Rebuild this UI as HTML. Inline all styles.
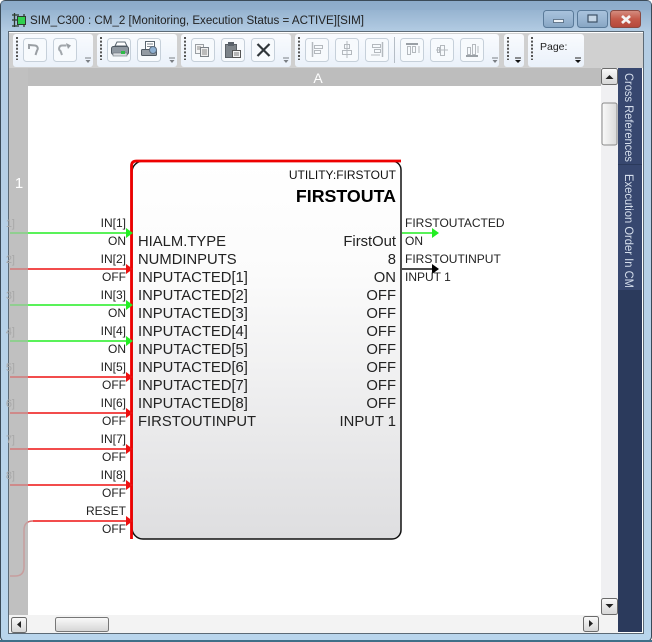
<!DOCTYPE html>
<html><head><meta charset="utf-8"><style>
html,body{margin:0;padding:0;width:652px;height:642px;overflow:hidden;background:#fff}
svg{position:absolute;left:0;top:0}
text{font-family:"Liberation Sans",sans-serif}
</style></head><body>
<svg width="652" height="642" viewBox="0 0 652 642" xmlns="http://www.w3.org/2000/svg">
<defs>
<linearGradient id="fr" x1="0" y1="0" x2="0" y2="1"><stop offset="0" stop-color="#8aa9c8"/><stop offset="0.05" stop-color="#b4cde4"/><stop offset="1" stop-color="#b9d5ec"/></linearGradient>
<linearGradient id="blk" x1="0" y1="0" x2="0" y2="1"><stop offset="0" stop-color="#ffffff"/><stop offset="0.3" stop-color="#fbfbfb"/><stop offset="1" stop-color="#dedee0"/></linearGradient>
<linearGradient id="btn" x1="0" y1="0" x2="0" y2="1"><stop offset="0" stop-color="#a9c3dd"/><stop offset="0.5" stop-color="#9ab6d2"/><stop offset="1" stop-color="#86a5c3"/></linearGradient>
<linearGradient id="cls" x1="0" y1="0" x2="0" y2="1"><stop offset="0" stop-color="#d58f82"/><stop offset="0.5" stop-color="#c45a4a"/><stop offset="1" stop-color="#b4473a"/></linearGradient>
<linearGradient id="sb" x1="0" y1="0" x2="0" y2="1"><stop offset="0" stop-color="#fafafa"/><stop offset="1" stop-color="#d5d5d5"/></linearGradient>
<linearGradient id="sbv" x1="0" y1="0" x2="1" y2="0"><stop offset="0" stop-color="#fafafa"/><stop offset="1" stop-color="#d9d9d9"/></linearGradient>
<linearGradient id="tb" x1="0" y1="0" x2="0" y2="1"><stop offset="0" stop-color="#f9fbfe"/><stop offset="1" stop-color="#eaf1fa"/></linearGradient>
</defs>

<!-- window frame -->
<rect width="652" height="642" fill="#fff"/>
<rect x="0.5" y="0.5" width="651" height="641" rx="5" fill="url(#fr)" stroke="#3a4a58"/>
<rect x="1" y="1" width="650" height="9" fill="#8daccb" opacity=".55"/>
<rect x="0" y="640" width="652" height="2" fill="#3f6f88"/>

<!-- title -->
<g>
<path d="M12 15h7M12 20h5M12 26h7M14.500 13v14M24 14v3M24 24v3" stroke="#2d3a2d" stroke-width="1.300" fill="none"/>
<rect x="17.500" y="16.500" width="8" height="8" fill="#30d050" stroke="#2d3a2d" stroke-width="1"/>
<text x="30" y="24" font-size="12.400" fill="#222" textLength="334" lengthAdjust="spacingAndGlyphs">SIM_C300 : CM_2 [Monitoring, Execution Status = ACTIVE][SIM]</text>
</g>

<!-- window buttons -->
<rect x="543.500" y="10.500" width="30" height="17" rx="3" fill="url(#btn)" stroke="#5a7a99"/>
<rect x="553.500" y="19.500" width="10" height="3" fill="#eef3f8" stroke="#41566b" stroke-width=".7"/>
<rect x="577.500" y="10.500" width="30" height="17" rx="3" fill="url(#btn)" stroke="#5a7a99"/>
<rect x="588" y="15" width="9" height="7" fill="#c5d6e6" stroke="#3d5166" stroke-width="1.200"/>
<rect x="610.500" y="10.500" width="30" height="17" rx="3" fill="url(#cls)" stroke="#8a4a42"/>
<path d="M622 16l8 7M630 16l-8 7" stroke="#f4f4f4" stroke-width="2.800"/>

<!-- client -->
<rect x="9" y="32" width="634" height="601" fill="#fff"/>
<rect x="8.500" y="31.500" width="635" height="602" fill="none" stroke="#5c6a76" stroke-width="1"/>
<rect x="9" y="33" width="634" height="35" fill="#d0d0d0"/>

<!-- toolbars -->
<rect x="13" y="34" width="80" height="33" rx="3" fill="url(#tb)"/>
<rect x="97" y="34" width="80" height="33" rx="3" fill="url(#tb)"/>
<rect x="181" y="34" width="110" height="33" rx="3" fill="url(#tb)"/>
<rect x="295" y="34" width="204" height="33" rx="3" fill="url(#tb)"/>
<rect x="504" y="34" width="20" height="33" rx="3" fill="url(#tb)"/>
<rect x="528" y="34" width="56" height="33" rx="3" fill="url(#tb)"/>
<g stroke="#555" stroke-width="2" stroke-dasharray="2 1.600" fill="none">
<path d="M17 37v23M101 37v23M185 37v23M299 37v23M508 37v23M532 37v23"/>
</g>
<g fill="#f7fafd" stroke="#c6d0da">
<rect x="23.500" y="38.500" width="23" height="23" rx="3"/>
<rect x="53.500" y="38.500" width="23" height="23" rx="3"/>
<rect x="107.500" y="38.500" width="23" height="23" rx="3"/>
<rect x="137.500" y="38.500" width="23" height="23" rx="3"/>
<rect x="191.500" y="38.500" width="23" height="23" rx="3"/>
<rect x="221.500" y="38.500" width="23" height="23" rx="3"/>
<rect x="251.500" y="38.500" width="23" height="23" rx="3"/>
<rect x="305.500" y="38.500" width="23" height="23" rx="3"/>
<rect x="335.500" y="38.500" width="23" height="23" rx="3"/>
<rect x="365.500" y="38.500" width="23" height="23" rx="3"/>
<rect x="400.500" y="38.500" width="23" height="23" rx="3"/>
<rect x="430.500" y="38.500" width="23" height="23" rx="3"/>
<rect x="460.500" y="38.500" width="23" height="23" rx="3"/>
</g>
<path d="M394.500 37v26" stroke="#b5bdc6"/>
<!-- undo / redo -->
<path d="M29 49v-4l6 .500a3 3 0 0 1 2 5l-1.500 4.500" fill="none" stroke="#9a9fa4" stroke-width="2"/>
<path d="M62 55l-1.500-4a3 3 0 0 1 2-5.500h4" fill="none" stroke="#a2a7ac" stroke-width="2"/>
<path d="M66 43l5 2.500-3 3.500z" fill="#9a9fa4"/>
<!-- printer -->
<path d="M115 46l2-4h8l2 4z" fill="#fff" stroke="#5a6670"/>
<rect x="111.500" y="46.500" width="17" height="8" rx="2" fill="#8f98a1" stroke="#4f5962"/>
<rect x="113" y="53" width="14" height="3" fill="#d9dde1" stroke="#6a737b" stroke-width=".6"/>
<rect x="121" y="51" width="4" height="3" fill="#2dbb47"/>
<!-- preview -->
<rect x="145.500" y="41.500" width="9" height="8" fill="#fff" stroke="#5a6670"/>
<path d="M147 44h6M147 46.500h6" stroke="#7f8890"/>
<rect x="141.500" y="49.500" width="15" height="6" rx="1" fill="#939ba3" stroke="#4f5962"/>
<circle cx="153" cy="50" r="3.500" fill="#8eb0d2" stroke="#5c6b7c"/>
<!-- copy -->
<rect x="195.500" y="44.500" width="8" height="9" fill="#f4f4f4" stroke="#9a9fa4"/>
<rect x="200.500" y="47.500" width="8" height="9" fill="#eee" stroke="#7a8086"/>
<path d="M202 50h5M202 52h5M202 54h5M197 47h4M197 49h3" stroke="#888"/>
<!-- paste -->
<rect x="225.500" y="44.500" width="11" height="13" fill="#7d848a" stroke="#5a6066"/>
<rect x="228" y="42" width="6" height="4" fill="#59616a"/>
<rect x="232.500" y="50.500" width="8" height="7" fill="#f4f4f4" stroke="#555"/>
<path d="M234 53h5M234 55h5" stroke="#777"/>
<!-- delete -->
<path d="M257.500 44l12 12M269.500 44l-12 12" stroke="#30363a" stroke-width="2.200"/>
<!-- align icons -->
<g fill="none" stroke="#b4b9be">
<path d="M312.500 42v15" stroke-width="1.500"/>
<rect x="314.500" y="45.500" width="8" height="3"/><rect x="314.500" y="50.500" width="6" height="3"/>
<path d="M347 41v17"/>
<rect x="344.500" y="44.500" width="5" height="4"/><rect x="342.500" y="50.500" width="9" height="4"/>
<path d="M382.500 42v15" stroke-width="1.500"/>
<rect x="372.500" y="44.500" width="8" height="3"/><rect x="374.500" y="49.500" width="6" height="3"/><path d="M371 55h9"/>
<path d="M406 44h12" stroke-width="2" stroke="#9aa0a6"/>
<rect x="407.500" y="46.500" width="3" height="8"/><rect x="412.500" y="46.500" width="3" height="6"/><path d="M419 53v-7"/>
<path d="M436 50h12"/>
<rect x="440.500" y="45.500" width="4" height="10"/><rect x="437.500" y="47.500" width="2" height="5"/>
<path d="M466 56h12" stroke-width="2" stroke="#9aa0a6"/>
<rect x="467.500" y="47.500" width="3" height="7"/><rect x="472.500" y="44.500" width="3" height="10"/><path d="M478 46v7"/>
</g>
<!-- chevrons -->
<g stroke="#7a7f85" fill="#7a7f85">
<path d="M85 58h6M169 58h6M283 58h6M492 58h6" fill="none"/>
<path d="M85.500 60h5l-2.500 3zM169.500 60h5l-2.500 3zM283.500 60h5l-2.500 3zM492.500 60h5l-2.500 3z" stroke="none"/>
</g>
<path d="M515 58h6M575 58h6" stroke="#222"/>
<path d="M515 60h6l-3 3zM575 60h6l-3 3z" fill="#111"/>
<text x="540" y="50" font-size="10.500" fill="#222">Page:</text>

<!-- rulers -->
<rect x="9" y="68" width="592" height="18" fill="#bdbdbd"/>
<rect x="9" y="68" width="19" height="547" fill="#c0c0c0"/>
<text x="318" y="83" font-size="14" fill="#fff" text-anchor="middle">A</text>
<text x="19" y="188" font-size="15" fill="#fff" text-anchor="middle">1</text>

<!-- block -->
<path d="M143 161H392a9 9 0 0 1 9 9V530a9 9 0 0 1-9 9H143a11 11 0 0 1-11-11V172a11 11 0 0 1 11-11z" fill="url(#blk)" stroke="#111" stroke-width="1.500"/>
<path d="M131.500 539V166q0-5 5-5H401" fill="none" stroke="#ee0000" stroke-width="2.800"/>

<!-- block text -->
<text x="396" y="179" font-size="12" fill="#111" text-anchor="end">UTILITY:FIRSTOUT</text>
<text x="396" y="202" font-size="17.800" font-weight="bold" fill="#000" text-anchor="end">FIRSTOUTA</text>
<g font-size="14.800" fill="#222">
<text x="138" y="246">HIALM.TYPE</text><text x="138" y="264">NUMDINPUTS</text>
<text x="138" y="282">INPUTACTED[1]</text><text x="138" y="300">INPUTACTED[2]</text>
<text x="138" y="318">INPUTACTED[3]</text><text x="138" y="336">INPUTACTED[4]</text>
<text x="138" y="354">INPUTACTED[5]</text><text x="138" y="372">INPUTACTED[6]</text>
<text x="138" y="390">INPUTACTED[7]</text><text x="138" y="408">INPUTACTED[8]</text>
<text x="138" y="426">FIRSTOUTINPUT</text>
</g>
<g font-size="14.800" fill="#222" text-anchor="end">
<text x="396" y="246">FirstOut</text><text x="396" y="264">8</text>
<text x="396" y="282">ON</text><text x="396" y="300">OFF</text><text x="396" y="318">OFF</text>
<text x="396" y="336">OFF</text><text x="396" y="354">OFF</text><text x="396" y="372">OFF</text>
<text x="396" y="390">OFF</text><text x="396" y="408">OFF</text><text x="396" y="426">INPUT 1</text>
</g>

<!-- input pins -->
<g font-size="12" fill="#222" text-anchor="end">
<text x="126" y="227">IN[1]</text><text x="126" y="245">ON</text>
<text x="126" y="263">IN[2]</text><text x="126" y="281">OFF</text>
<text x="126" y="299">IN[3]</text><text x="126" y="317">ON</text>
<text x="126" y="335">IN[4]</text><text x="126" y="353">ON</text>
<text x="126" y="371">IN[5]</text><text x="126" y="389">OFF</text>
<text x="126" y="407">IN[6]</text><text x="126" y="425">OFF</text>
<text x="126" y="443">IN[7]</text><text x="126" y="461">OFF</text>
<text x="126" y="479">IN[8]</text><text x="126" y="497">OFF</text>
<text x="126" y="515">RESET</text><text x="126" y="533">OFF</text>
</g>
<g fill="none" stroke-width="1.500">
<path d="M10 233H127M10 305H127M10 341H127" stroke="#22ee22"/>
<path d="M10 269H127M10 377H127M10 413H127M10 449H127M10 485H127" stroke="#ee1111"/>
<path d="M33 521H127" stroke="#ee1111"/>
<path d="M33 521q-9 0-9 9v37q0 9-9 9h-5" stroke="#d26c6c"/>
</g>
<!-- ruler veil over wires, matching faded lines and clipped page labels -->
<rect x="9" y="200" width="19" height="390" fill="#c0c0c0" opacity=".6"/>
<g font-size="11" fill="#a8a8a8" text-anchor="end">
<text x="15" y="227">1]</text><text x="15" y="263">2]</text><text x="15" y="299">3]</text><text x="15" y="335">4]</text>
<text x="15" y="371">5]</text><text x="15" y="407">6]</text><text x="15" y="443">7]</text><text x="15" y="479">8]</text>
</g>
<g fill="#22ee22">
<path d="M126 228l7 5-7 5zM126 300l7 5-7 5zM126 336l7 5-7 5z"/>
</g>
<g fill="#ee1111">
<path d="M126 264l7 5-7 5zM126 372l7 5-7 5zM126 408l7 5-7 5zM126 444l7 5-7 5zM126 480l7 5-7 5zM126 516l7 5-7 5z"/>
</g>

<!-- output pins -->
<path d="M402 233H432" stroke="#22ee22" stroke-width="1.500"/>
<path d="M432 228l7 5-7 5z" fill="#22ee22"/>
<path d="M402 269H432" stroke="#111" stroke-width="1.500"/>
<path d="M432 264l7 5-7 5z" fill="#000"/>
<g font-size="12" fill="#222">
<text x="405" y="227">FIRSTOUTACTED</text><text x="405" y="245">ON</text>
<text x="405" y="263">FIRSTOUTINPUT</text><text x="405" y="281">INPUT 1</text>
</g>

<!-- v scrollbar -->
<rect x="601" y="68" width="17" height="547" fill="#f0f0f2"/>
<rect x="601.500" y="68.500" width="16" height="16" rx="2" fill="url(#sb)" stroke="#6a6a6a"/>
<path d="M605.500 79l4-4 4 4z" fill="#222"/>
<rect x="602" y="103" width="15" height="42" rx="2" fill="url(#sbv)" stroke="#8a8a8a"/>
<rect x="601.500" y="598.500" width="16" height="16" rx="2" fill="url(#sb)" stroke="#6a6a6a"/>
<path d="M605.500 604l4 4 4-4z" fill="#222"/>

<!-- h scrollbar -->
<rect x="9" y="615" width="609" height="18" fill="#f3f3f3"/>
<rect x="11.500" y="617.500" width="15" height="15" rx="2" fill="url(#sb)" stroke="#6a6a6a"/>
<path d="M21 621v7l-4-3.500z" fill="#222"/>
<rect x="55.500" y="617.500" width="53" height="14" rx="2" fill="url(#sb)" stroke="#777"/>
<rect x="583.500" y="616.500" width="15" height="15" rx="2" fill="url(#sb)" stroke="#6a6a6a"/>
<path d="M589 620v7l4-3.500z" fill="#222"/>

<!-- side tabs -->
<rect x="618" y="68" width="24" height="564" fill="#2b3a5c"/>
<rect x="618" y="68" width="24" height="96" fill="#37476f"/>
<rect x="618" y="165" width="24" height="125" fill="#37476f"/>
<text transform="translate(625,73) rotate(90)" font-size="12" fill="#d5deec" textLength="89" lengthAdjust="spacingAndGlyphs">Cross References</text>
<text transform="translate(625,174) rotate(90)" font-size="12" fill="#d5deec" textLength="114" lengthAdjust="spacingAndGlyphs">Execution Order In CM</text>
</svg>
</body></html>
